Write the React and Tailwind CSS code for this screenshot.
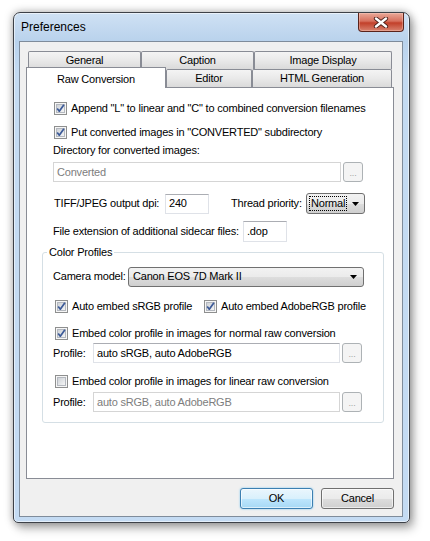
import React from "react";

const F = "font-['Liberation_Sans',Arial,sans-serif]";

function Check({ checked }) {
  return (
    <svg width="13" height="13" viewBox="0 0 13 13" className="shrink-0">
      <defs>
        <linearGradient id="cbg" x1="0" y1="0" x2="1" y2="1">
          <stop offset="0" stopColor="#cbcfd5" />
          <stop offset="1" stopColor="#f7f7f7" />
        </linearGradient>
      </defs>
      <rect x="0.5" y="0.5" width="12" height="12" fill="#f6f6f6" stroke="#8e8f8f" />
      <rect x="2.5" y="2.5" width="8" height="8" fill="url(#cbg)" stroke="#b4b8bf" />
      {checked && (
        <path d="M3.2 6.4 L5.3 9.2 L9.9 2.8" fill="none" stroke="#3c5a98" strokeWidth="1.7" strokeLinejoin="round" />
      )}
    </svg>
  );
}

function CheckRow({ checked, children }) {
  return (
    <div className="flex h-[13px] items-center gap-[4px] ml-[1px] whitespace-nowrap">
      <Check checked={checked} />
      <span className="leading-[13px]">{children}</span>
    </div>
  );
}

function Dots() {
  return (
    <div className="flex h-[20px] w-[20px] shrink-0 items-end justify-center rounded-[3px] border border-[#adb2b5] bg-[#f4f4f4] pb-[3px] text-[9px] leading-[9px] text-[#a3a3a3]">
      ...
    </div>
  );
}

function Arrow() {
  return (
    <svg width="7" height="4" viewBox="0 0 7 4" className="shrink-0">
      <path d="M0 0 H7 L3.5 4 Z" fill="#000" />
    </svg>
  );
}

function Tab({ label, w, selected }) {
  if (selected) {
    return (
      <div className={`relative z-10 -mt-[2px] flex h-[21px] items-start justify-center border-x border-t border-[#898c95] bg-white pt-[3px] ${w}`}>
        {label}
      </div>
    );
  }
  return (
    <div className={`flex h-[18px] items-center justify-center rounded-t-[2px] border-x border-t border-[#898c95] bg-[linear-gradient(to_bottom,#f4f4f4,#e9e9e9_50%,#dadada)] ${w}`}>
      {label}
    </div>
  );
}

export default function App() {
  return (
    <div className={`h-[541px] w-[430px] overflow-hidden bg-white pl-[13px] pt-[12px] text-[11px] tracking-[-0.2px] whitespace-nowrap text-black ${F}`}>
      <div className="flex h-[511px] w-[397px] flex-col rounded-t-[7px] rounded-b-[5px] border border-[#3d4148] bg-[linear-gradient(to_bottom,#cfe1f4,#b9d2ec_28px,#c4dbf2_60px,#c4dbf3)] shadow-[inset_0_0_0_1px_rgba(255,255,255,0.55),0_0_9px_rgba(0,0,0,0.35),4px_6px_10px_rgba(0,0,0,0.25)]">
        <div className="flex h-[28px] items-start justify-between">
          <div className="pl-[7px] pt-[7px] text-[12px] leading-[14px] tracking-normal">Preferences</div>
          <div className="mr-[5px] flex h-[19px] w-[46px] items-center justify-center rounded-b-[4px] border border-t-0 border-[#5a231b] bg-[linear-gradient(to_bottom,#eaa999,#d7705d_45%,#c2402a_55%,#d8826f)] shadow-[inset_0_0_0_1px_rgba(255,220,210,0.35)]">
            <svg width="16" height="11" viewBox="0 0 16 11">
              <path d="M3 1.5 L13 9.5 M13 1.5 L3 9.5" stroke="#4a1f19" strokeWidth="4.2" strokeLinecap="round" />
              <path d="M3 1.5 L13 9.5 M13 1.5 L3 9.5" stroke="#ffffff" strokeWidth="2.4" strokeLinecap="round" />
            </svg>
          </div>
        </div>
        <div className="pl-[5px] pr-[6px]">
          <div className="flex h-[476px] w-[384px] flex-col border border-[#7f8c9b] bg-[#f0f0f0] pl-[6px] pr-[8px] pt-[9px]">
            {/* tabs */}
            <div className="flex ml-[2px]">
              <Tab label="General" w="w-[113px]" />
              <Tab label="Caption" w="w-[113px]" />
              <Tab label="Image Display" w="w-[138px]" />
            </div>
            <div className="flex h-[18px] items-start">
              <Tab label="Raw Conversion" w="w-[140px]" selected />
              <Tab label="Editor" w="w-[86px]" />
              <Tab label="HTML Generation" w="w-[140px]" />
            </div>
            {/* panel */}
            <div className="flex h-[392px] w-[368px] flex-col border border-[#898c95] bg-white pl-[15px] pr-[11px] pt-[14px]">
              <div className="flex flex-col pl-[11px]">
                <CheckRow checked>Append "L" to linear and "C" to combined conversion filenames</CheckRow>
                <div className="mt-[11px]">
                  <CheckRow checked>Put converted images in "CONVERTED" subdirectory</CheckRow>
                </div>
                <div className="mt-[5px] h-[13px] leading-[13px]">Directory for converted images:</div>
                <div className="mt-[5px] flex h-[20px] gap-[2px]">
                  <div className="flex h-[20px] w-[288px] items-center border border-[#d5d5d5] pl-[3px] text-[#7d7d7d]">Converted</div>
                  <Dots />
                </div>
                <div className="mt-[11px] flex h-[21px] items-center">
                  <div className="w-[112px] shrink-0 pl-[1px]">TIFF/JPEG output dpi:</div>
                  <div className="flex h-[20px] w-[44px] shrink-0 items-center border border-[#dfe2e8] border-t-[#abadb3] pl-[3px]">240</div>
                  <div className="ml-[22px] w-[75px] shrink-0">Thread priority:</div>
                  <div className="flex h-[21px] w-[59px] shrink-0 items-center justify-between rounded-[3px] border border-[#707070] bg-[linear-gradient(to_bottom,#f2f2f2,#ebebeb_50%,#dddddd_51%,#cfcfcf)] pl-[2px] pr-[5px]">
                    <span className="border border-dotted border-black px-[1px] leading-[13px]">Normal</span>
                    <Arrow />
                  </div>
                </div>
                <div className="mt-[7px] flex h-[21px] items-center">
                  <div className="w-[190px] shrink-0">File extension of additional sidecar files:</div>
                  <div className="flex h-[21px] w-[44px] shrink-0 items-center border border-[#dfe2e8] border-t-[#abadb3] pl-[3px]">.dop</div>
                </div>
              </div>
              <fieldset className="mt-[3px] w-[340px] rounded-[3px] border border-[#d5dfe5] pb-[10px] pl-[10px] pr-[17px] pt-[8px]">
                <legend className="-ml-[6px] px-[2px] leading-[14px]">Color Profiles</legend>
                <div className="flex h-[19px] items-center">
                  <div className="w-[75px] shrink-0">Camera model:</div>
                  <div className="flex h-[20px] w-[236px] shrink-0 items-center justify-between rounded-[3px] border border-[#707070] bg-[linear-gradient(to_bottom,#f2f2f2,#ebebeb_50%,#dddddd_51%,#cfcfcf)] pl-[4px] pr-[6px]">
                    <span>Canon EOS 7D Mark II</span>
                    <Arrow />
                  </div>
                </div>
                <div className="mt-[14px] flex">
                  <div className="w-[150px] shrink-0 pl-[1px]">
                    <CheckRow checked>Auto embed sRGB profile</CheckRow>
                  </div>
                  <CheckRow checked>Auto embed AdobeRGB profile</CheckRow>
                </div>
                <div className="mt-[14px] pl-[1px]">
                  <CheckRow checked>Embed color profile in images for normal raw conversion</CheckRow>
                </div>
                <div className="mt-[3px] flex h-[20px] items-center gap-[2px]">
                  <div className="w-[38px] shrink-0">Profile:</div>
                  <div className="flex h-[20px] w-[247px] shrink-0 items-center border border-[#dfe2e8] border-t-[#abadb3] pl-[3px]">auto sRGB, auto AdobeRGB</div>
                  <Dots />
                </div>
                <div className="mt-[12px] pl-[1px]">
                  <CheckRow>Embed color profile in images for linear raw conversion</CheckRow>
                </div>
                <div className="mt-[4px] flex h-[20px] items-center gap-[2px]">
                  <div className="w-[38px] shrink-0">Profile:</div>
                  <div className="flex h-[20px] w-[247px] shrink-0 items-center border border-[#d5d5d5] pl-[3px] text-[#7d7d7d]">auto sRGB, auto AdobeRGB</div>
                  <Dots />
                </div>
              </fieldset>
            </div>
            {/* buttons */}
            <div className="mt-[9px] flex justify-end gap-[8px]">
              <div className="flex h-[21px] w-[73px] items-center justify-center rounded-[3px] border border-[#3c7fb1] bg-[linear-gradient(to_bottom,#eaf6fd,#d9f0fc_50%,#bee6fd_51%,#a7d9f5)] shadow-[inset_0_0_0_1px_rgba(255,255,255,0.6),0_0_2px_#6fc3f0]">OK</div>
              <div className="flex h-[21px] w-[73px] items-center justify-center rounded-[3px] border border-[#707070] bg-[linear-gradient(to_bottom,#f2f2f2,#ebebeb_50%,#dddddd_51%,#cfcfcf)] shadow-[inset_0_0_0_1px_rgba(255,255,255,0.6)]">Cancel</div>
            </div>
          </div>
        </div>
      </div>
    </div>
  );
}
